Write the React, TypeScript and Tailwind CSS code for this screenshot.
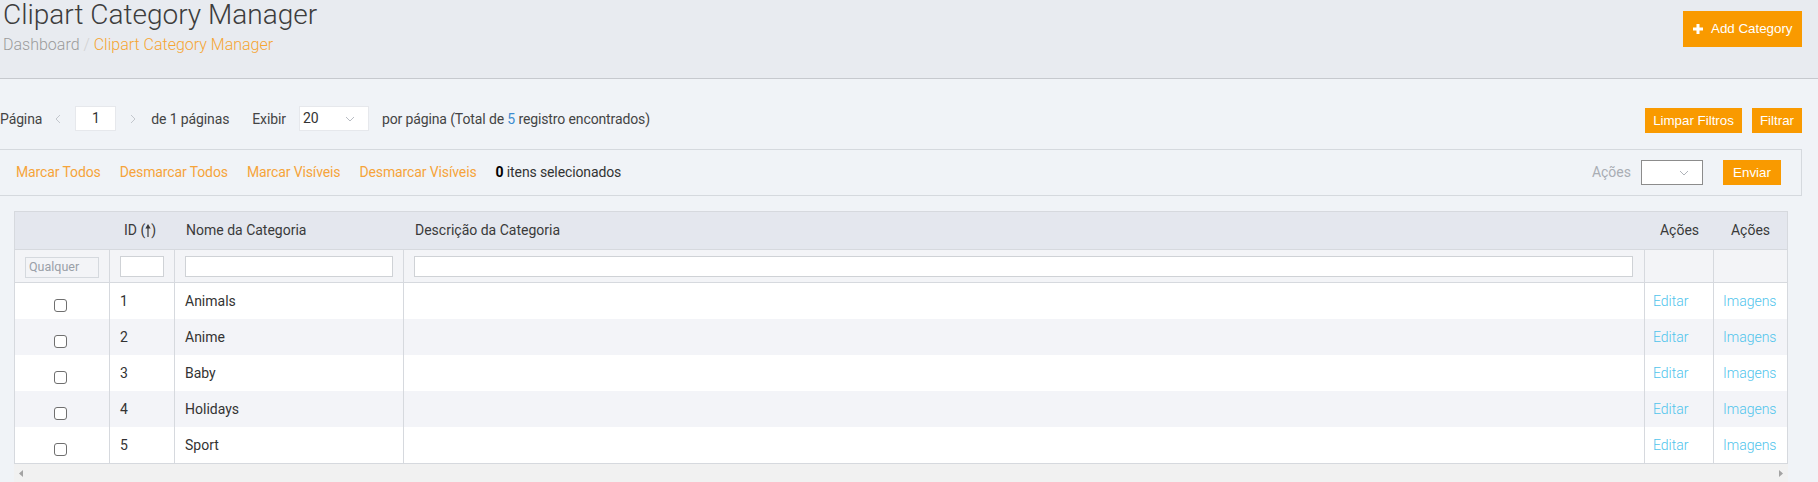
import React from 'react';

const ChevL = () => (
  <svg width="6" height="10" viewBox="0 0 6 10" className="shrink-0">
    <path d="M5 1 L1 5 L5 9" fill="none" stroke="#c3c7cd" strokeWidth="1" />
  </svg>
);
const ChevR = () => (
  <svg width="6" height="10" viewBox="0 0 6 10" className="shrink-0">
    <path d="M1 1 L5 5 L1 9" fill="none" stroke="#c3c7cd" strokeWidth="1" />
  </svg>
);
const ChevD = ({ color = '#b8bcc3' }: { color?: string }) => (
  <svg width="10" height="6" viewBox="0 0 10 6" className="shrink-0">
    <path d="M1 1 L5 5 L9 1" fill="none" stroke={color} strokeWidth="1" />
  </svg>
);

const rows = [
  { id: 1, name: 'Animals' },
  { id: 2, name: 'Anime' },
  { id: 3, name: 'Baby' },
  { id: 4, name: 'Holidays' },
  { id: 5, name: 'Sport' },
];

export default function App() {
  return (
    <div className="w-[1818px] h-[482px] overflow-hidden bg-[#f0f3f7] font-['Roboto',sans-serif] text-[14px] text-[#333]">
      {/* Header */}
      <header className="h-[79px] bg-[#e8ebf0] border-b border-[#c6c9ce] flex justify-between">
        <div className="pl-[3px]">
          <h1 className="text-[28px] leading-[30px] font-light text-[#3d3d3d]">Clipart Category Manager</h1>
          <div className="mt-[5px] text-[16px] leading-[20px] font-light">
            <span className="text-[#9b9b9b]">Dashboard</span>
            <span className="text-[#d2d2d2]"> / </span>
            <span className="text-[#f6a532]">Clipart Category Manager</span>
          </div>
        </div>
        <button className="mt-[11px] mr-[16px] h-[36px] w-[119px] bg-[#f99a00] text-white flex items-center pl-[10px] gap-[8px] font-['Liberation_Sans',Arial,sans-serif] text-[13.333px]">
          <svg width="10" height="10" viewBox="0 0 10 10" className="shrink-0">
            <rect x="3.5" y="0" width="3" height="10" fill="#fff" />
            <rect x="0" y="3.5" width="10" height="3" fill="#fff" />
          </svg>
          Add Category
        </button>
      </header>

      {/* Pagination toolbar */}
      <div className="mt-[27px] h-[28px] flex items-start justify-between pr-[16px]">
        <div className="h-[25px] flex items-center text-[#444] tracking-[-0.12px]">
          <span className="pt-[1px]">Página</span>
          <span className="ml-[13px]"><ChevL /></span>
          <div className="ml-[14px] w-[41px] h-[25px] bg-white border border-[#e6e8ec] flex items-center justify-center text-[#333]">1</div>
          <span className="ml-[14px]"><ChevR /></span>
          <span className="ml-[15px] pt-[1px]">de 1 páginas</span>
          <span className="ml-[23px] pt-[1px]">Exibir</span>
          <div className="ml-[13px] w-[70px] h-[25px] bg-white border border-[#e6e8ec] flex items-center justify-between pl-[3px] pr-[13px] text-[#333]">
            <span>20</span>
            <ChevD />
          </div>
          <span className="ml-[13px] pt-[1px]">
            por página (Total de <span className="text-[#3b8bd0]">5</span> registro encontrados)
          </span>
        </div>
        <div className="mt-[2px] flex gap-[10px] font-['Liberation_Sans',Arial,sans-serif] text-[13.333px] text-white">
          <button className="h-[25px] w-[97px] bg-[#f99a00] flex items-center justify-center">Limpar Filtros</button>
          <button className="h-[25px] w-[50px] bg-[#f99a00] flex items-center justify-center">Filtrar</button>
        </div>
      </div>

      {/* Bulk actions */}
      <div className="mt-[15px] mr-[16px] h-[47px] border-y border-r border-[#d5d9de] flex items-center pl-[16px] pr-[20px]">
        <div className="flex items-center gap-[19px] text-[#f6a43a] tracking-[-0.12px]">
          <span>Marcar Todos</span>
          <span>Desmarcar Todos</span>
          <span>Marcar Visíveis</span>
          <span>Desmarcar Visíveis</span>
          <span className="text-[#333]">
            <b className="font-bold text-black">0</b> itens selecionados
          </span>
        </div>
        <div className="ml-auto flex items-center">
          <span className="text-[#a9adb4]">Ações</span>
          <div className="ml-[10px] w-[62px] h-[25px] border border-[#8c8c8c] bg-white flex items-center justify-end pr-[13px]">
            <ChevD color="#b0b4ba" />
          </div>
          <button className="ml-[20px] w-[58px] h-[25px] bg-[#f99a00] text-white flex items-center justify-center font-['Liberation_Sans',Arial,sans-serif] text-[13.333px]">
            Enviar
          </button>
        </div>
      </div>

      {/* Table */}
      <div className="mt-[15px] ml-[14px] w-[1774px] border border-[#d6d9de]">
        <div className="grid grid-cols-[95px_65px_229px_1241px_69px_73px] h-[38px] bg-[#e4e7ee] border-b border-[#d6d9de] items-center text-[#3a3a3a]">
          <div />
          <div className="pl-[14px] flex items-center">
            <span>ID (</span>
            <svg width="6" height="13" viewBox="0 0 6 13" className="shrink-0">
              <line x1="3" y1="3" x2="3" y2="13" stroke="#3a3a3a" strokeWidth="1.2" />
              <polygon points="0.3,4.5 3,0 5.7,4.5" fill="#3a3a3a" />
            </svg>
            <span>)</span>
          </div>
          <div className="pl-[11px]">Nome da Categoria</div>
          <div className="pl-[11px]">Descrição da Categoria</div>
          <div className="text-center">Ações</div>
          <div className="text-center">Ações</div>
        </div>
        <div className="grid grid-cols-[95px_65px_229px_1241px_69px_73px] h-[33px] bg-[#f3f4f7] border-b border-[#d6d9de]">
          <div className="border-r border-[#d6d9de] flex items-center pl-[10px]">
            <div className="mt-[2px] w-[74px] h-[21px] border border-[#d5d9de] bg-[#f3f4f7] flex items-center pl-[3px] text-[12.5px] text-[#9aa0a8]">
              Qualquer
            </div>
          </div>
          <div className="border-r border-[#d6d9de] flex items-center px-[10px]">
            <div className="w-full h-[21px] bg-white border border-[#cfd2d6]" />
          </div>
          <div className="border-r border-[#d6d9de] flex items-center px-[10px]">
            <div className="w-full h-[21px] bg-white border border-[#cfd2d6]" />
          </div>
          <div className="border-r border-[#d6d9de] flex items-center pl-[10px] pr-[11px]">
            <div className="w-full h-[21px] bg-white border border-[#cfd2d6]" />
          </div>
          <div className="border-r border-[#d6d9de]" />
          <div />
        </div>
        {rows.map((r, i) => (
          <div
            key={r.id}
            className={
              'grid grid-cols-[95px_65px_229px_1241px_69px_73px] h-[36px] ' +
              (i % 2 === 1 ? 'bg-[#f3f4f8]' : 'bg-white')
            }
          >
            <div className="border-r border-[#d6d9de] flex items-center justify-center pr-[4px]">
              <div className="mt-[8px] w-[13px] h-[13px] rounded-[3px] border border-[#6f6f6f] bg-white" />
            </div>
            <div className="border-r border-[#d6d9de] flex items-center pl-[10px]">{r.id}</div>
            <div className="border-r border-[#d6d9de] flex items-center pl-[10px]">{r.name}</div>
            <div className="border-r border-[#d6d9de]" />
            <div className="border-r border-[#d6d9de] flex items-center pl-[8px] text-[#4fc4ec] font-light">Editar</div>
            <div className="flex items-center pl-[9px] text-[#4fc4ec] font-light">Imagens</div>
          </div>
        ))}
      </div>
      {/* horizontal scrollbar */}
      <div className="ml-[14px] w-[1774px] h-[18px] bg-[#f1f1f1] flex items-center justify-between px-[5px]">
        <svg width="4" height="7" viewBox="0 0 4 7">
          <polygon points="4,0 0,3.5 4,7" fill="#a3a3a3" />
        </svg>
        <svg width="4" height="7" viewBox="0 0 4 7">
          <polygon points="0,0 4,3.5 0,7" fill="#a3a3a3" />
        </svg>
      </div>
    </div>
  );
}
